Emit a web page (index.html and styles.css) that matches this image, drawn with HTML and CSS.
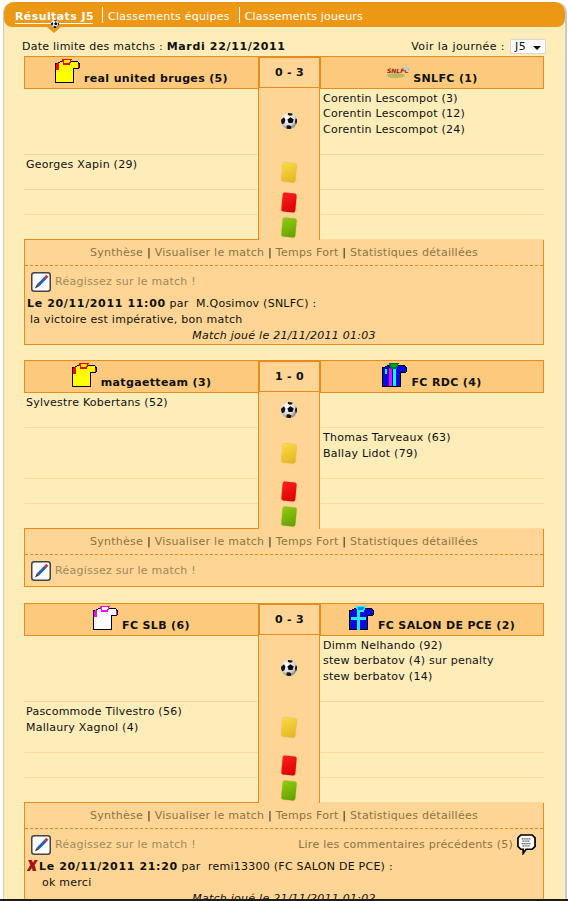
FILE: index.html
```html
<!DOCTYPE html>
<html lang="fr">
<head>
<meta charset="utf-8">
<title>Résultats J5</title>
<link rel="stylesheet" href="styles.css">
</head>
<body>
<svg class="defs" width="0" height="0" aria-hidden="true">
  <defs>
    <radialGradient id="ballbg" cx="40%" cy="32%" r="75%"><stop offset="0" stop-color="#fff"/><stop offset=".6" stop-color="#d8d8d8"/><stop offset="1" stop-color="#6e6e6e"/></radialGradient>
    <symbol id="ball" viewBox="0 0 16 16">
      <circle cx="8" cy="8" r="8" fill="url(#ballbg)"/>
      <path d="M9.500 4.200l3.200 2.200-1.200 3.700H7.600L6.400 6.400z" fill="#0c0c0c"/>
      <path d="M7 .1L11.500.6 11.300 2.200 8.800 2.800 6.800 1.800zM.3 6.500L3 4.200 4.400 6.800 3.500 10.200 1.200 11.200C.1 9.400-.2 8 .3 6.500zM15.800 6L14.600 5.400 14 8.600 14.800 11.600C16 9.800 16.200 7.800 15.800 6zM5.600 12.600L8.200 12.200 10.400 13.400 9.800 15.800C8.400 16.100 7 16 5.600 15.500z" fill="#141414"/>
    </symbol>
    <symbol id="pencil" viewBox="0 0 20 20">
      <rect x=".75" y=".75" width="18.500" height="18.500" rx="2.500" fill="#fbfbfb" stroke="#444" stroke-width="1.500"/>
      <path d="M15.200 2.800l2.200 2-1.700 2-2.300-2z" fill="#c8302c"/>
      <path d="M13.400 4.800l2.300 2L8 14.600l-2.200-2z" fill="#2a5fb0"/>
      <path d="M5.800 12.600L8 14.600 3.800 16.400z" fill="#3a3a3a"/>
    </symbol>
    <symbol id="bubble" viewBox="0 0 20 22">
      <path d="M4 1h12L19 4v9l-3 3H9.500L6.500 20.500V16H4l-3-3V4z" fill="#fff" stroke="#000" stroke-width="1.800"/>
      <path d="M5 5h10M6 7.500h8M5 10h10M6 12.500h8" stroke="#111" stroke-width="1.400" stroke-dasharray="1 1"/>
    </symbol>
    <symbol id="cross" viewBox="0 0 11 11">
      <path d="M1.500 0h3l1.500 3 2-3h2.500L7.500 5l1.500 6H6L5 7.500 2.500 11H0l3.500-6z" fill="#b01010" stroke="#7a2020" stroke-width=".5"/>
    </symbol>
  </defs>
</svg>
<div class="panel">
  <nav class="tabs">
    <a class="tab active">Résultats J5<svg class="tabball"><use href="#ball"/></svg></a>
    <a class="tab t2">Classements équipes</a>
    <a class="tab t3">Classements joueurs</a>
  </nav>
  <div class="content">
    <div class="topline">
      <span>Date limite des matchs : <b class="date">Mardi 22/11/2011</b></span>
      <span class="pick">Voir la journée : <span class="select">J5</span></span>
    </div>

    <section class="match">
      <div class="row head">
        <div class="team">
          <svg class="shirt" viewBox="0 0 25 24"><path class="body yellow" d="M7 2H17L23 3 24.500 5V9L18 10V23.500H.5V5z"/><path class="trim" d="M.8 5L3.500 4V11H.8zM22.500 4L24 5V9H22.500z" fill="#f00"/><path class="collar" d="M7.500 .5h8.500L14.500 5H9z" fill="#ffea00" stroke="#f00" stroke-width="1.500"/></svg>
          <span>real united bruges (5)</span>
        </div>
        <div class="score">0 - 3</div>
        <div class="team">
          <svg class="logo" viewBox="0 0 23 12"><ellipse cx="10" cy="9.500" rx="9" ry="2.500" fill="#b8b860"/><text x="1" y="7" class="logotext">SNLFC</text><circle cx="20.500" cy="2.500" r="2" fill="#9fd4ff"/></svg>
          <span>SNLFC (1)</span>
        </div>
      </div>
      <div class="row">
        <div class="side"></div>
        <div class="mid"><svg class="ball"><use href="#ball"/></svg></div>
        <div class="side">Corentin Lescompot (3)<br>Corentin Lescompot (12)<br>Corentin Lescompot (24)</div>
      </div>
      <div class="row">
        <div class="side">Georges Xapin (29)</div>
        <div class="mid"><i class="card y"></i></div>
        <div class="side"></div>
      </div>
      <div class="row">
        <div class="side empty"></div>
        <div class="mid"><i class="card r"></i></div>
        <div class="side empty"></div>
      </div>
      <div class="row last">
        <div class="side empty"></div>
        <div class="mid"><i class="card g"></i></div>
        <div class="side empty"></div>
      </div>
      <div class="box">
        <div class="links">Synthèse <em>|</em> Visualiser le match <em>|</em> Temps Fort <em>|</em> Statistiques détaillées</div>
        <div class="react"><svg class="pencil"><use href="#pencil"/></svg><span>Réagissez sur le match !</span></div>
        <div class="comment">
          <p><b class="date">Le 20/11/2011 11:00</b> par &nbsp;M.Qosimov (SNLFC) :</p>
          <p class="msg">la victoire est impérative, bon match</p>
          <p class="played">Match joué le 21/11/2011 01:03</p>
        </div>
      </div>
    </section>

    <section class="match second">
      <div class="row head">
        <div class="team">
          <svg class="shirt" viewBox="0 0 25 24"><path class="body yellow" d="M7 2H17L23 3 24.500 5V9L18 10V23.500H.5V5z"/><path class="trim" d="M.8 5L3.500 4V11H.8zM22.500 4L24 5V9H22.500z" fill="#f00"/><path class="collar" d="M7.500 .5h8.500L14.500 5H9z" fill="#ffea00" stroke="#f00" stroke-width="1.500"/></svg>
          <span>matgaetteam (3)</span>
        </div>
        <div class="score">1 - 0</div>
        <div class="team">
          <svg class="shirt" viewBox="0 0 25 24"><path class="body blue" d="M7 2H17L23 3 24.500 5V9L18 10V23.500H.5V5z"/><path d="M7 5h3v18H7z" fill="#f0f"/><path d="M11 5h3v18h-3z" fill="#0ff"/><path d="M3 6h1.500v5H3z" fill="#0ff"/><path d="M7.500 .5h8.500L14.500 5H9z" fill="#0a0" stroke="#064" stroke-width="1.500"/></svg>
          <span>FC RDC (4)</span>
        </div>
      </div>
      <div class="row">
        <div class="side">Sylvestre Kobertans (52)</div>
        <div class="mid"><svg class="ball"><use href="#ball"/></svg></div>
        <div class="side"></div>
      </div>
      <div class="row">
        <div class="side"></div>
        <div class="mid"><i class="card y"></i></div>
        <div class="side">Thomas Tarveaux (63)<br>Ballay Lidot (79)</div>
      </div>
      <div class="row">
        <div class="side empty"></div>
        <div class="mid"><i class="card r"></i></div>
        <div class="side empty"></div>
      </div>
      <div class="row last">
        <div class="side empty"></div>
        <div class="mid"><i class="card g"></i></div>
        <div class="side empty"></div>
      </div>
      <div class="box">
        <div class="links">Synthèse <em>|</em> Visualiser le match <em>|</em> Temps Fort <em>|</em> Statistiques détaillées</div>
        <div class="react"><svg class="pencil"><use href="#pencil"/></svg><span>Réagissez sur le match !</span></div>
      </div>
    </section>

    <section class="match">
      <div class="row head">
        <div class="team">
          <svg class="shirt" viewBox="0 0 25 24"><path class="body white" d="M7 2H17L23 3 24.500 5V9L18 10V23.500H.5V5z"/><path d="M.8 5L3.500 4V11H.8zM22.500 4L24 5V9H22.500z" fill="#f0f"/><path d="M7.500 .5h8.500L14.500 5H9z" fill="#fff" stroke="#f0f" stroke-width="1.500"/></svg>
          <span>FC SLB (6)</span>
        </div>
        <div class="score">0 - 3</div>
        <div class="team">
          <svg class="shirt" viewBox="0 0 25 24"><path class="body blue" d="M7 2H17L23 3 24.500 5V9L18 10V23.500H.5V5z"/><path d="M7.500 6h3.500v5h6v3h-6v9.500H7.500V14H1.500v-3h6z" fill="#2ee"/><path d="M7.500 .5h8.500L14.500 5H9z" fill="#08f" stroke="#0ff" stroke-width="1.500"/></svg>
          <span>FC SALON DE PCE (2)</span>
        </div>
      </div>
      <div class="row">
        <div class="side"></div>
        <div class="mid"><svg class="ball"><use href="#ball"/></svg></div>
        <div class="side">Dimm Nelhando (92)<br>stew berbatov (4) sur penalty<br>stew berbatov (14)</div>
      </div>
      <div class="row">
        <div class="side">Pascommode Tilvestro (56)<br>Mallaury Xagnol (4)</div>
        <div class="mid"><i class="card y"></i></div>
        <div class="side"></div>
      </div>
      <div class="row">
        <div class="side empty"></div>
        <div class="mid"><i class="card r"></i></div>
        <div class="side empty"></div>
      </div>
      <div class="row last">
        <div class="side empty"></div>
        <div class="mid"><i class="card g"></i></div>
        <div class="side empty"></div>
      </div>
      <div class="box">
        <div class="links">Synthèse <em>|</em> Visualiser le match <em>|</em> Temps Fort <em>|</em> Statistiques détaillées</div>
        <div class="react">
          <svg class="pencil"><use href="#pencil"/></svg><span>Réagissez sur le match !</span>
          <span class="older">Lire les commentaires précédents (5)<svg class="bubble"><use href="#bubble"/></svg></span>
        </div>
        <div class="comment">
          <p class="crossed"><svg class="cross"><use href="#cross"/></svg><b class="date">Le 20/11/2011 21:20</b> par &nbsp;remi13300 (FC SALON DE PCE) :</p>
          <p class="msg deep">ok merci</p>
          <p class="played">Match joué le 21/11/2011 01:02</p>
        </div>
      </div>
    </section>
  </div>
</div>
<div class="edge"></div>
</body>
</html>
```
FILE: styles.css
```css
html, body { margin: 0; padding: 0; background: #fff; }
body {
  height: 901px;
  overflow: hidden;
  position: relative;
  font-family: Verdana, "DejaVu Sans", sans-serif;
  font-size: 11px;
  line-height: 15.5px;
  letter-spacing: .25px;
  color: #111;
}
.defs { position: absolute; }
p { margin: 0; }
.date { letter-spacing: .65px; }
.panel {
  margin: 2px 1px 0 3px;
  background: #feecb9;
  border-left: 1px solid #c9c9c9;
  border-right: 2px solid #c9c9c9;
  border-radius: 10px 10px 0 0;
  height: 899px;
}
.tabs {
  display: flex;
  align-items: flex-start;
  height: 25px;
  padding: 5px 0 0 11px;
  box-sizing: border-box;
  background: #ed9814;
  border-radius: 10px 10px 8px 8px;
  position: relative;
}
.tab {
  color: #fff;
  height: 16px;
  padding: 0 9px 0 5px;
  border-left: 1px solid #fff;
  line-height: 19px;
  white-space: nowrap;
}
.tab.active {
  border-left: 0;
  padding: 0;
  margin: 0 9px 0 0;
  font-weight: bold;
  letter-spacing: .4px;
  border-bottom: 1px solid #fff;
  position: relative;
  width: 78px;
}
.tab.t3 { letter-spacing: .2px; }
.tab.active::after {
  content: "";
  position: absolute;
  left: 32px;
  top: 20px;
  border: 7px solid transparent;
  border-top: 6px solid #ed9814;
  border-bottom: 0;
}
.tabball {
  position: absolute;
  left: 36px;
  top: 13px;
  width: 8px;
  height: 8px;
  z-index: 2;
}
.content { padding: 0 0 0 20px; width: 520px; }
.topline {
  display: flex;
  justify-content: space-between;
  align-items: center;
  height: 29px;
  padding: 10px 0 0;
  margin: 0 -2px 0 -2px;
  box-sizing: border-box;
}
.pick { display: flex; align-items: center; gap: 5px; letter-spacing: .42px; }
.select {
  display: block;
  position: relative;
  width: 36px;
  height: 15px;
  box-sizing: border-box;
  padding-left: 4px;
  background: #fff;
  border: 1px solid #d6d6d6;
  border-radius: 2px;
  line-height: 14px;
}
.select::after {
  content: "";
  position: absolute;
  right: 4px;
  top: 6px;
  border: 4px solid transparent;
  border-top: 4px solid #111;
  border-bottom: 0;
}
.match { margin-bottom: 15px; }
.match.second { margin-bottom: 16.5px; }
.row { display: grid; grid-template-columns: 234px 62px 224px; }
.side {
  padding: 2.5px 2px 16.5px;
  border-bottom: 1px solid #fed99c;
  box-sizing: border-box;
  min-height: 25px;
}
.side.empty { padding: 0; }
.mid {
  background: #fed594;
  border-left: 1px solid #e98b1d;
  border-right: 1px solid #e98b1d;
  box-sizing: border-box;
  display: flex;
  align-items: center;
  justify-content: center;
}
.row .side:last-child { padding-left: 3px; }
.last .side:first-child { border-bottom-color: #e98b1d; }
.row.head { height: 32px; grid-template-columns: 234px 63px 223px; }
.team {
  background: #fdc97c;
  border: 1px solid #e98b1d;
  box-sizing: border-box;
  display: flex;
  align-items: flex-end;
  justify-content: center;
  gap: 4px;
  padding: 2px 0 2px;
  font-weight: bold;
  letter-spacing: .35px;
}
.team:first-child { border-right: 0; }
.team:last-child { border-left: 0; }
.score {
  background: #fed594;
  border: 2px solid #e98b1d;
  box-sizing: border-box;
  display: flex;
  align-items: center;
  justify-content: center;
  font-weight: bold;
}
.shirt { width: 25px; height: 24px; margin-bottom: 3px; shape-rendering: crispEdges; }
.body { stroke: #000; stroke-width: 1; }
.yellow { fill: #ffff00; }
.blue { fill: #0808e0; }
.white { fill: #fff; }
.logo { width: 23px; height: 12px; margin-bottom: 8px; }
.logotext { font-size: 6px; font-style: italic; font-weight: bold; fill: #a01818; letter-spacing: 0; }
.ball { width: 16px; height: 16px; }
.card {
  display: block;
  width: 14px;
  height: 19px;
  border-radius: 2px;
  transform: rotate(5deg);
  box-shadow: 0 0 1px rgba(120, 80, 0, .6);
}
.card.y { background: linear-gradient(150deg, #fbdc3e, #e2b323); }
.card.r { background: linear-gradient(150deg, #ff2020, #d80000); }
.card.g { background: linear-gradient(150deg, #93cc12, #629f00); }
.box {
  background: #fed594;
  border: 1px solid #e98b1d;
  border-top: 0;
}
.links {
  height: 26px;
  box-sizing: border-box;
  padding-top: 5px;
  text-align: center;
  letter-spacing: .27px;
  color: #8c7446;
  border-bottom: 1px dashed #e98b1d;
}
.links em { font-style: normal; color: #222; }
.react {
  display: flex;
  align-items: center;
  height: 31px;
  padding: 1px 7px 0 6px;
  box-sizing: border-box;
  color: #a08a5e;
}
.pencil { width: 20px; height: 20px; margin-right: 4px; }
.older { margin-left: auto; color: #8c7446; display: flex; align-items: center; gap: 4px; }
.bubble { width: 19px; height: 21px; }
.comment { margin-top: -1px; padding: 0 2px; line-height: 16px; }
.msg { padding-left: 3px; }
.msg.deep { padding-left: 15px; }
.played { font-style: italic; text-align: center; }
.crossed { position: relative; padding-left: 12px; }
.cross { position: absolute; left: 0; top: 1px; width: 11px; height: 11px; }
.edge {
  position: absolute;
  left: 0;
  right: 0;
  top: 899px;
  height: 2px;
  background: #1c1c1c;
}
```
